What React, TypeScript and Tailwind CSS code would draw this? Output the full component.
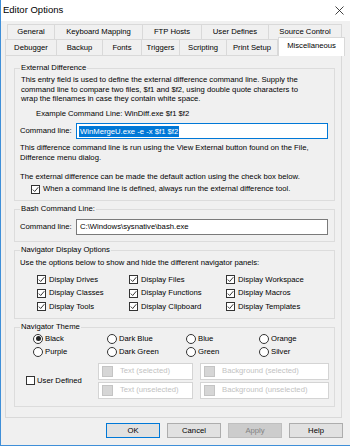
import React from 'react';

const row1 = [
  { label: 'General', w: 48 },
  { label: 'Keyboard Mapping', w: 88 },
  { label: 'FTP Hosts', w: 59 },
  { label: 'User Defines', w: 67 },
  { label: 'Source Control', w: 73 },
];

const row2 = [
  { label: 'Debugger', w: 52 },
  { label: 'Backup', w: 46 },
  { label: 'Fonts', w: 39 },
  { label: 'Triggers', w: 38 },
  { label: 'Scripting', w: 47 },
  { label: 'Print Setup', w: 51 },
];

const displayOpts = [
  'Display Drives', 'Display Files', 'Display Workspace',
  'Display Classes', 'Display Functions', 'Display Macros',
  'Display Tools', 'Display Clipboard', 'Display Templates',
];

const themes = ['Black', 'Dark Blue', 'Blue', 'Orange', 'Purple', 'Dark Green', 'Green', 'Silver'];

function Check({ checked }: { checked?: boolean }) {
  return (
    <span className="inline-flex h-[9px] w-[9px] shrink-0 items-center justify-center border border-[#333] bg-white">
      {checked && (
        <svg viewBox="0 0 7 7" className="h-[7px] w-[7px]">
          <path d="M0.8 3.6 L2.7 5.5 L6.3 1.2" stroke="#222" strokeWidth="0.9" fill="none" />
        </svg>
      )}
    </span>
  );
}

function Radio({ checked }: { checked?: boolean }) {
  return (
    <span className="inline-flex h-[10px] w-[10px] shrink-0 items-center justify-center rounded-full border border-[#333] bg-white">
      {checked && <span className="h-[5px] w-[5px] rounded-full bg-[#222]" />}
    </span>
  );
}

function Group({ title, className, children }: { title: string; className: string; children: React.ReactNode }) {
  return (
    <fieldset className={`border border-[#dcdcdc] px-[5px] ${className}`}>
      <legend className="px-px leading-[10px]">{title}</legend>
      {children}
    </fieldset>
  );
}

function ColorBox({ label, w }: { label: string; w: string }) {
  return (
    <div className={`flex h-[17px] items-center border border-[#d4d4d4] bg-white pl-[3px] ${w}`}>
      <span className="h-[11px] w-[11px] border border-[#c4c4c4] bg-[#d6d6d6]" />
      <span className="ml-[7px] text-[#c2c2c2]">{label}</span>
    </div>
  );
}

export default function App() {
  return (
    <div className="flex h-[446px] w-[350px] flex-col border-b border-l border-[#3f8fd8] bg-[#f0f0f0] font-['Liberation_Sans',Arial,sans-serif] text-[7.7px] text-black">
      {/* title bar */}
      <div className="flex h-[21px] shrink-0 items-center justify-between bg-white pl-[2px] pr-[6px]">
        <span className="text-[9.5px]">Editor Options</span>
        <svg viewBox="0 0 9 9" className="h-[9px] w-[9px]">
          <path d="M0.5 0.5 L8.5 8.5 M8.5 0.5 L0.5 8.5" stroke="#111" strokeWidth="0.8" />
        </svg>
      </div>

      {/* tabs */}
      <div className="mt-[3px] flex h-[15px] pl-[6px]">
        {row1.map((t, i) => (
          <div
            key={t.label}
            className={`flex items-center justify-center border-t border-r border-[#d9d9d9] ${i === 0 ? 'border-l' : ''}`}
            style={{ width: t.w }}
          >
            {t.label}
          </div>
        ))}
      </div>
      <div className="flex h-[16px] items-end pl-[4px]">
        {row2.map((t, i) => (
          <div
            key={t.label}
            className={`flex h-[16px] items-center justify-center border-t border-r border-[#d9d9d9] ${i === 0 ? 'border-l' : ''}`}
            style={{ width: t.w }}
          >
            {t.label}
          </div>
        ))}
        <div className="relative z-10 -mb-px flex h-[19px] w-[67px] items-center justify-center border-x border-t border-[#d9d9d9] bg-white pb-[3px]">
          Miscellaneous
        </div>
      </div>

      {/* panel */}
      <div className="ml-[4px] flex h-[363px] w-[337px] flex-col gap-[3px] border border-[#d9d9d9] pl-[8px] pr-[6px] pt-[7px]">
        <Group title="External Difference" className="h-[138px]">
          <p className="mt-[2px] whitespace-nowrap pl-px leading-[9.5px]">
            This entry field is used to define the external difference command line. Supply the
            <br />
            command line to compare two files, $f1 and $f2, using double quote characters to
            <br />
            wrap the filenames in case they contain white space.
          </p>
          <div className="mt-[5.5px] flex h-[10px] items-center">
            <span className="w-[16px] shrink-0" />
            <span>Example Command Line: WinDiff.exe $f1 $f2</span>
          </div>
          <div className="mt-[4px] flex h-[16px] items-center">
            <span className="w-[56px]">Command line:</span>
            <div className="flex h-[16px] w-[252px] items-center border border-[#0078d7] bg-white pl-[2px]">
              <span className="bg-[#0078d7] px-px leading-[11px] text-white">WinMergeU.exe -e -x $f1 $f2</span>
            </div>
          </div>
          <p className="mt-[4px] whitespace-nowrap leading-[10px]">
            This difference command line is run using the View External button found on the File,
            <br />
            Difference menu dialog.
          </p>
          <p className="mt-[9px] leading-[10px]">
            The external difference can be made the default action using the check box below.
          </p>
          <div className="mt-[2px] flex h-[10px] items-center">
            <span className="w-[11px] shrink-0" />
            <Check checked />
            <span className="ml-[3px]">When a command line is defined, always run the external difference tool.</span>
          </div>
        </Group>

        <Group title="Bash Command Line:" className="h-[38px]">
          <div className="mt-[5px] flex h-[16px] items-center">
            <span className="w-[56px]">Command line:</span>
            <div className="flex h-[16px] w-[252px] items-center border border-[#7a7a7a] bg-white pl-[3px]">
              C:\Windows\sysnative\bash.exe
            </div>
          </div>
        </Group>

        <Group title="Navigator Display Options" className="h-[74px]">
          <p className="mt-[3px] leading-[10px]">Use the options below to show and hide the different navigator panels:</p>
          <div className="mt-[5px] grid grid-cols-[92px_97px_1fr] pl-[17px]">
            {displayOpts.map((o) => (
              <div key={o} className="flex h-[13.5px] items-center gap-[3px]">
                <Check checked />
                <span>{o}</span>
              </div>
            ))}
          </div>
        </Group>

        <Group title="Navigator Theme" className="h-[85px]">
          <div className="grid grid-cols-[74px_79px_73px_1fr] pl-[13px]">
            {themes.map((t, i) => (
              <div key={t} className="flex h-[13px] items-center gap-[2px]">
                <Radio checked={i === 0} />
                <span>{t}</span>
              </div>
            ))}
          </div>
          <div className="mt-[4.5px] flex">
            <div className="flex w-[78px] items-center gap-[2px] pl-[6px]">
              <Check />
              <span>User Defined</span>
            </div>
            <div className="grid grid-cols-[95px_129px] gap-x-[7px] gap-y-[2px]">
              <ColorBox label="Text (selected)" w="w-[95px]" />
              <ColorBox label="Background (selected)" w="w-[129px]" />
              <ColorBox label="Text (unselected)" w="w-[95px]" />
              <ColorBox label="Background (unselected)" w="w-[129px]" />
            </div>
          </div>
        </Group>
      </div>

      {/* buttons */}
      <div className="mt-[5px] flex justify-end gap-[7px] pr-[7px]">
        <button className="flex h-[15px] w-[54px] items-center justify-center border border-[#0078d7] bg-[#e1e1e1]">OK</button>
        <button className="flex h-[15px] w-[54px] items-center justify-center border border-[#adadad] bg-[#e1e1e1]">Cancel</button>
        <button className="flex h-[15px] w-[54px] items-center justify-center border border-[#bfbfbf] bg-[#cccccc] text-[#838383]">Apply</button>
        <button className="flex h-[15px] w-[54px] items-center justify-center border border-[#adadad] bg-[#e1e1e1]">Help</button>
      </div>
    </div>
  );
}
